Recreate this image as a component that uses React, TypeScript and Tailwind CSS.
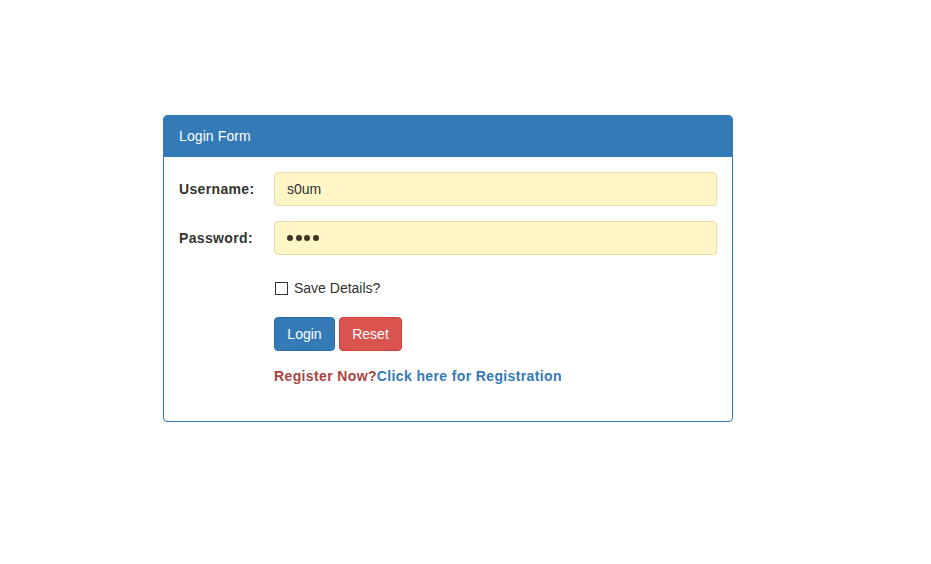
import React from "react";

export default function App() {
  return (
    <div
      className="min-h-[564px] w-full bg-white pt-[115px] pl-[163px] text-[14px] leading-[20px] text-[#333]"
      style={{ fontFamily: '"Liberation Sans", Arial, Helvetica, sans-serif' }}
    >
      <div className="w-[570px] rounded-[4px] border border-[#337ab7] bg-white">
        <div className="rounded-t-[3px] border-b border-[#337ab7] bg-[#337ab7] px-[15px] py-[10px] text-white tracking-[0.1px]">
          Login Form
        </div>
        <div className="px-[15px] pt-[15px] pb-[15px]">
          <div className="mb-[15px] flex items-center">
            <label className="w-[95px] font-bold tracking-[0.35px]">Username:</label>
            <div className="flex h-[34px] w-[443px] items-center rounded-[4px] border border-[#e9dca6] bg-[#fff5c7] px-[12px]">
              s0um
            </div>
          </div>
          <div className="mb-[15px] flex items-center">
            <label className="w-[95px] font-bold tracking-[0.35px]">Password:</label>
            <div className="flex h-[34px] w-[443px] items-center gap-[2.5px] rounded-[4px] border border-[#e9dca6] bg-[#fff5c7] px-[12px]">
              <span className="inline-block h-[6px] w-[6px] rounded-full bg-[#3e3428]" />
              <span className="inline-block h-[6px] w-[6px] rounded-full bg-[#3e3428]" />
              <span className="inline-block h-[6px] w-[6px] rounded-full bg-[#3e3428]" />
              <span className="inline-block h-[6px] w-[6px] rounded-full bg-[#3e3428]" />
            </div>
          </div>
          <div className="mb-[15px] flex h-[32px] items-center pt-[4px] pl-[95px]">
            <span className="mr-[6px] ml-[1px] inline-block h-[13px] w-[13px] border border-[#333] bg-white" />
            <span>Save Details?</span>
          </div>
          <div className="mb-[15px] flex gap-[4px] pl-[95px]">
            <button className="h-[34px] w-[61px] rounded-[4px] border border-[#2e6da4] bg-[#337ab7] text-white">
              Login
            </button>
            <button className="h-[34px] w-[63px] rounded-[4px] border border-[#d43f3a] bg-[#d9534f] text-white">
              Reset
            </button>
          </div>
          <div className="mb-[20px] pl-[95px] font-bold tracking-[0.37px]">
            <span className="text-[#a94442]">Register Now?</span>
            <span className="text-[#337ab7]">Click here for Registration</span>
          </div>
        </div>
      </div>
    </div>
  );
}
